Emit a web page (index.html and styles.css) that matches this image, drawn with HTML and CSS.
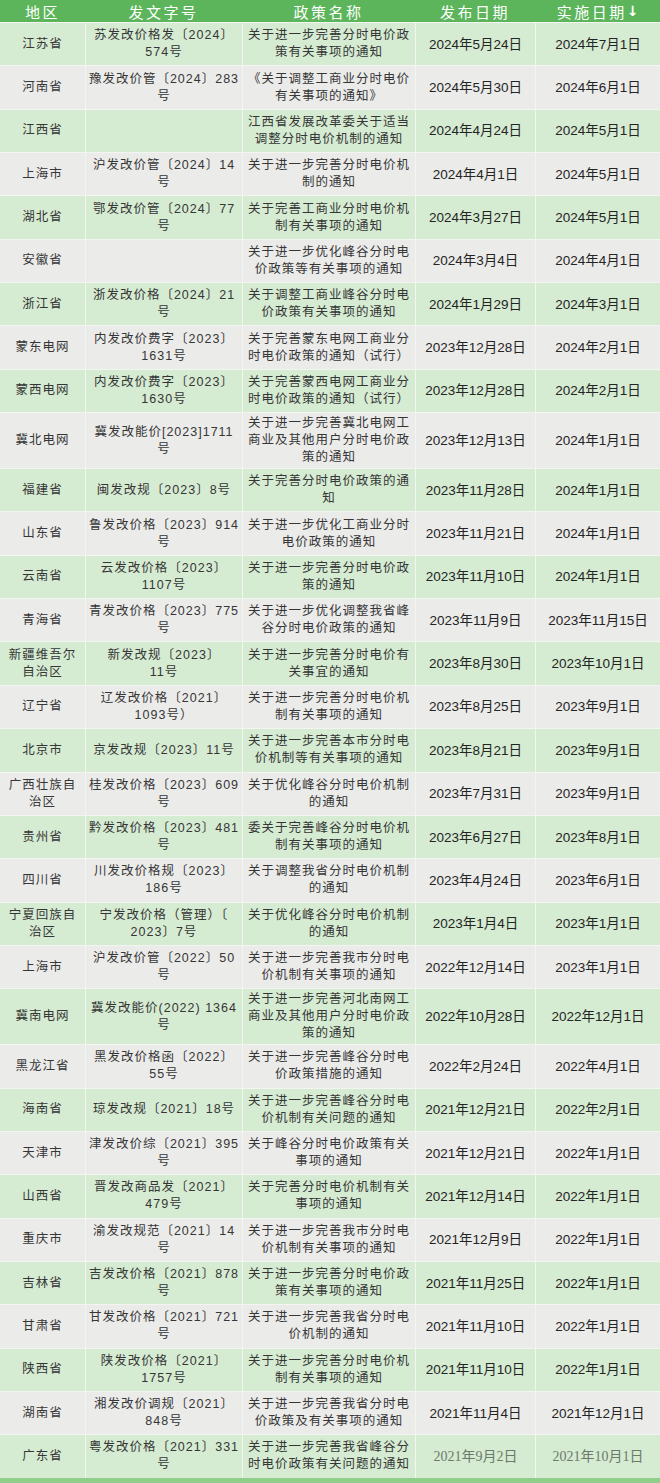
FILE: index.html
```html
<!DOCTYPE html>
<html lang="zh-CN">
<head>
<meta charset="utf-8">
<title>分时电价政策汇总</title>
<link rel="stylesheet" href="styles.css">
</head>
<body>
<div class="table">
  <div class="head">
    <div class="hc">地区</div>
    <div class="hc">发文字号</div>
    <div class="hc">政策名称</div>
    <div class="hc">发布日期</div>
    <div class="hc">实施日期<b class="arrow">↓</b></div>
  </div>

  <div class="row g"><div class="cell">江苏省</div><div class="cell">苏发改价格发〔2024〕<br>574号</div><div class="cell">关于进一步完善分时电价政<br>策有关事项的通知</div><div class="cell date">2024年5月24日</div><div class="cell date">2024年7月1日</div></div>
  <div class="row w"><div class="cell">河南省</div><div class="cell">豫发改价管〔2024〕283<br>号</div><div class="cell">《关于调整工商业分时电价<br>有关事项的通知》</div><div class="cell date">2024年5月30日</div><div class="cell date">2024年6月1日</div></div>
  <div class="row g"><div class="cell">江西省</div><div class="cell"></div><div class="cell">江西省发展改革委关于适当<br>调整分时电价机制的通知</div><div class="cell date">2024年4月24日</div><div class="cell date">2024年5月1日</div></div>
  <div class="row w"><div class="cell">上海市</div><div class="cell">沪发改价管〔2024〕14<br>号</div><div class="cell">关于进一步完善分时电价机<br>制的通知</div><div class="cell date">2024年4月1日</div><div class="cell date">2024年5月1日</div></div>
  <div class="row g"><div class="cell">湖北省</div><div class="cell">鄂发改价管〔2024〕77<br>号</div><div class="cell">关于完善工商业分时电价机<br>制有关事项的通知</div><div class="cell date">2024年3月27日</div><div class="cell date">2024年5月1日</div></div>
  <div class="row w"><div class="cell">安徽省</div><div class="cell"></div><div class="cell">关于进一步优化峰谷分时电<br>价政策等有关事项的通知</div><div class="cell date">2024年3月4日</div><div class="cell date">2024年4月1日</div></div>
  <div class="row g"><div class="cell">浙江省</div><div class="cell">浙发改价格〔2024〕21<br>号</div><div class="cell">关于调整工商业峰谷分时电<br>价政策有关事项的通知</div><div class="cell date">2024年1月29日</div><div class="cell date">2024年3月1日</div></div>
  <div class="row w"><div class="cell">蒙东电网</div><div class="cell">内发改价费字〔2023〕<br>1631号</div><div class="cell">关于完善蒙东电网工商业分<br>时电价政策的通知（试行）</div><div class="cell date">2023年12月28日</div><div class="cell date">2024年2月1日</div></div>
  <div class="row g"><div class="cell">蒙西电网</div><div class="cell">内发改价费字〔2023〕<br>1630号</div><div class="cell">关于完善蒙西电网工商业分<br>时电价政策的通知（试行）</div><div class="cell date">2023年12月28日</div><div class="cell date">2024年2月1日</div></div>
  <div class="row w"><div class="cell">冀北电网</div><div class="cell">冀发改能价[2023]1711<br>号</div><div class="cell">关于进一步完善冀北电网工<br>商业及其他用户分时电价政<br>策的通知</div><div class="cell date">2023年12月13日</div><div class="cell date">2024年1月1日</div></div>
  <div class="row g"><div class="cell">福建省</div><div class="cell">闽发改规〔2023〕8号</div><div class="cell">关于完善分时电价政策的通<br>知</div><div class="cell date">2023年11月28日</div><div class="cell date">2024年1月1日</div></div>
  <div class="row w"><div class="cell">山东省</div><div class="cell">鲁发改价格〔2023〕914<br>号</div><div class="cell">关于进一步优化工商业分时<br>电价政策的通知</div><div class="cell date">2023年11月21日</div><div class="cell date">2024年1月1日</div></div>
  <div class="row g"><div class="cell">云南省</div><div class="cell">云发改价格〔2023〕<br>1107号</div><div class="cell">关于进一步完善分时电价政<br>策的通知</div><div class="cell date">2023年11月10日</div><div class="cell date">2024年1月1日</div></div>
  <div class="row w"><div class="cell">青海省</div><div class="cell">青发改价格〔2023〕775<br>号</div><div class="cell">关于进一步优化调整我省峰<br>谷分时电价政策的通知</div><div class="cell date">2023年11月9日</div><div class="cell date">2023年11月15日</div></div>
  <div class="row g"><div class="cell">新疆维吾尔<br>自治区</div><div class="cell">新发改规〔2023〕<br>11号</div><div class="cell">关于进一步完善分时电价有<br>关事宜的通知</div><div class="cell date">2023年8月30日</div><div class="cell date">2023年10月1日</div></div>
  <div class="row w"><div class="cell">辽宁省</div><div class="cell">辽发改价格〔2021〕<br>1093号）</div><div class="cell">关于进一步完善分时电价机<br>制有关事项的通知</div><div class="cell date">2023年8月25日</div><div class="cell date">2023年9月1日</div></div>
  <div class="row g"><div class="cell">北京市</div><div class="cell">京发改规〔2023〕11号</div><div class="cell">关于进一步完善本市分时电<br>价机制等有关事项的通知</div><div class="cell date">2023年8月21日</div><div class="cell date">2023年9月1日</div></div>
  <div class="row w"><div class="cell">广西壮族自<br>治区</div><div class="cell">桂发改价格〔2023〕609<br>号</div><div class="cell">关于优化峰谷分时电价机制<br>的通知</div><div class="cell date">2023年7月31日</div><div class="cell date">2023年9月1日</div></div>
  <div class="row g"><div class="cell">贵州省</div><div class="cell">黔发改价格〔2023〕481<br>号</div><div class="cell">委关于完善峰谷分时电价机<br>制有关事项的通知</div><div class="cell date">2023年6月27日</div><div class="cell date">2023年8月1日</div></div>
  <div class="row w"><div class="cell">四川省</div><div class="cell">川发改价格规〔2023〕<br>186号</div><div class="cell">关于调整我省分时电价机制<br>的通知</div><div class="cell date">2023年4月24日</div><div class="cell date">2023年6月1日</div></div>
  <div class="row g"><div class="cell">宁夏回族自<br>治区</div><div class="cell">宁发改价格（管理）〔<br>2023〕7号</div><div class="cell">关于优化峰谷分时电价机制<br>的通知</div><div class="cell date">2023年1月4日</div><div class="cell date">2023年1月1日</div></div>
  <div class="row w"><div class="cell">上海市</div><div class="cell">沪发改价管〔2022〕50<br>号</div><div class="cell">关于进一步完善我市分时电<br>价机制有关事项的通知</div><div class="cell date">2022年12月14日</div><div class="cell date">2023年1月1日</div></div>
  <div class="row g"><div class="cell">冀南电网</div><div class="cell">冀发改能价(2022) 1364<br>号</div><div class="cell">关于进一步完善河北南网工<br>商业及其他用户分时电价政<br>策的通知</div><div class="cell date">2022年10月28日</div><div class="cell date">2022年12月1日</div></div>
  <div class="row w"><div class="cell">黑龙江省</div><div class="cell">黑发改价格函〔2022〕<br>55号</div><div class="cell">关于进一步完善峰谷分时电<br>价政策措施的通知</div><div class="cell date">2022年2月24日</div><div class="cell date">2022年4月1日</div></div>
  <div class="row g"><div class="cell">海南省</div><div class="cell">琼发改规〔2021〕18号</div><div class="cell">关于进一步完善峰谷分时电<br>价机制有关问题的通知</div><div class="cell date">2021年12月21日</div><div class="cell date">2022年2月1日</div></div>
  <div class="row w"><div class="cell">天津市</div><div class="cell">津发改价综〔2021〕395<br>号</div><div class="cell">关于峰谷分时电价政策有关<br>事项的通知</div><div class="cell date">2021年12月21日</div><div class="cell date">2022年1月1日</div></div>
  <div class="row g"><div class="cell">山西省</div><div class="cell">晋发改商品发〔2021〕<br>479号</div><div class="cell">关于完善分时电价机制有关<br>事项的通知</div><div class="cell date">2021年12月14日</div><div class="cell date">2022年1月1日</div></div>
  <div class="row w"><div class="cell">重庆市</div><div class="cell">渝发改规范〔2021〕14<br>号</div><div class="cell">关于进一步完善我市分时电<br>价机制有关事项的通知</div><div class="cell date">2021年12月9日</div><div class="cell date">2022年1月1日</div></div>
  <div class="row g"><div class="cell">吉林省</div><div class="cell">吉发改价格〔2021〕878<br>号</div><div class="cell">关于进一步完善分时电价政<br>策有关事项的通知</div><div class="cell date">2021年11月25日</div><div class="cell date">2022年1月1日</div></div>
  <div class="row w"><div class="cell">甘肃省</div><div class="cell">甘发改价格〔2021〕721<br>号</div><div class="cell">关于进一步完善我省分时电<br>价机制的通知</div><div class="cell date">2021年11月10日</div><div class="cell date">2022年1月1日</div></div>
  <div class="row g"><div class="cell">陕西省</div><div class="cell">陕发改价格〔2021〕<br>1757号</div><div class="cell">关于进一步完善分时电价机<br>制有关事项的通知</div><div class="cell date">2021年11月10日</div><div class="cell date">2022年1月1日</div></div>
  <div class="row w"><div class="cell">湖南省</div><div class="cell">湘发改价调规〔2021〕<br>848号</div><div class="cell">关于进一步完善我省分时电<br>价政策及有关事项的通知</div><div class="cell date">2021年11月4日</div><div class="cell date">2021年12月1日</div></div>
  <div class="row g"><div class="cell">广东省</div><div class="cell">粤发改价格〔2021〕331<br>号</div><div class="cell">关于进一步完善我省峰谷分<br>时电价政策有关问题的通知</div><div class="cell date old">2021年9月2日</div><div class="cell date old">2021年10月1日</div></div>

  <div class="foot"></div>
</div>
</body>
</html>
```

FILE: styles.css
```css
html, body {
  margin: 0;
  padding: 0;
  background: #8fcf8b;
}

body {
  font-family: "Liberation Sans", "Noto Sans CJK SC", sans-serif;
  color: #333333;
}

.table {
  width: 660px;
}

.head,
.row {
  display: grid;
  grid-template-columns: 85px 157px 173px 120px 125px;
}

.head {
  height: 22px;
  background: #5cb55a;
  color: #ffffff;
}

.hc {
  display: flex;
  align-items: center;
  justify-content: center;
  font-family: "Noto Sans CJK SC", sans-serif;
  font-size: 15px;
  font-weight: 400;
  letter-spacing: 2.5px;
}

.arrow {
  font-family: "DejaVu Sans", sans-serif;
  font-weight: bold;
  font-size: 14px;
  letter-spacing: 0;
}

.row {
  box-sizing: border-box;
  min-height: 43.35px;
  border-top: 1px solid #f2f5f1;
}

.row.g {
  background: #d5ebd2;
}

.row.w {
  background: #ebebea;
}

.cell {
  display: flex;
  align-items: center;
  justify-content: center;
  text-align: center;
  padding: 2px 1px;
  font-size: 12.5px;
  line-height: 17px;
  letter-spacing: 1px;
  color: #363636;
}

.cell + .cell {
  border-left: 1px solid #f2f5f1;
}

.date {
  font-size: 13.5px;
  letter-spacing: 0;
  color: #242424;
}

.date.old {
  font-family: "Liberation Serif", "Noto Sans CJK SC", serif;
  font-size: 14px;
  color: #6c7a6a;
}

.foot {
  height: 6px;
  background: #8fcf8b;
}
```
